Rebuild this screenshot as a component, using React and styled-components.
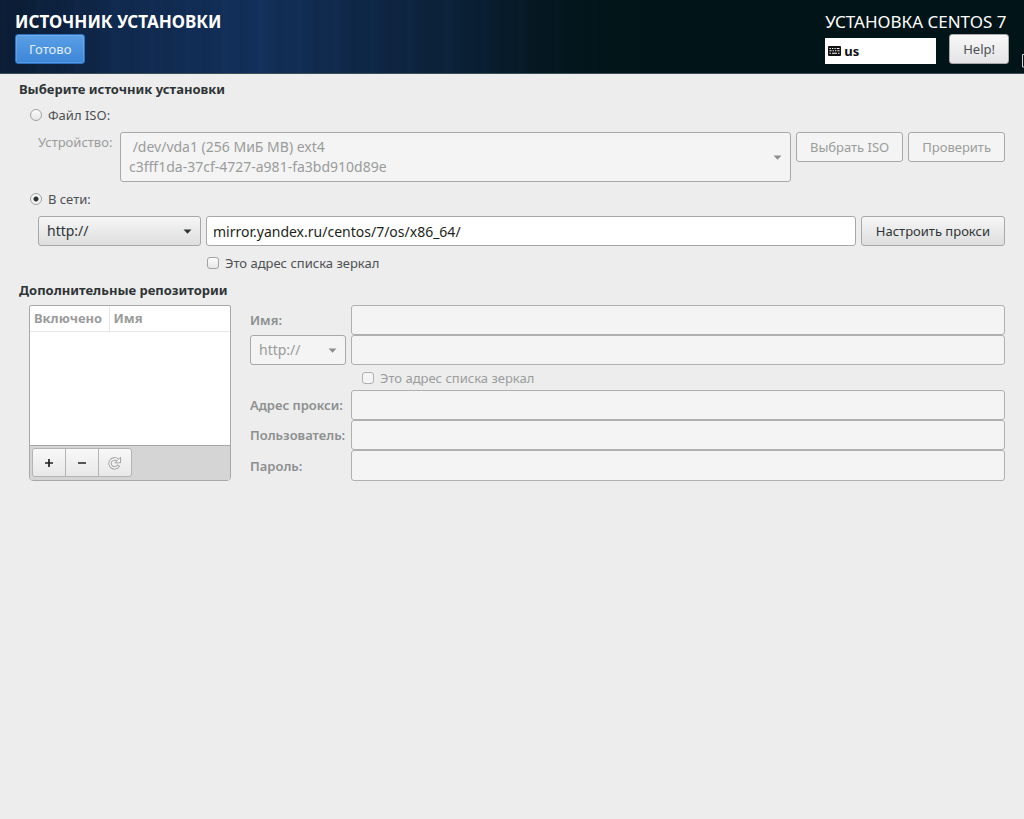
import React, { useState } from "react";
import styled, { createGlobalStyle, css } from "styled-components";

const colors = {
  page: "#ededed",
  text: "#2e3436",
  soft: "#4c5052",
  muted: "#9a9c9b",
  mutedBold: "#8c8f8f",
  border: "#a8a8a8",
  insensitive: "#f4f4f4",
};

const GlobalStyle = createGlobalStyle`
  * { box-sizing: border-box; }
  body { margin: 0; background: ${colors.page}; }
  body, button, input, select {
    font-family: "Noto Sans", "Open Sans", sans-serif;
    font-size: 13px;
    line-height: 20px;
    color: ${colors.text};
  }
`;

const Header = styled.header`
  position: relative;
  display: flex;
  justify-content: space-between;
  height: 74px;
  padding: 10px 15px 0;
  color: #fff;
  border-bottom: 1px solid #3a4f55;
  background:
    linear-gradient(90deg, transparent 45%, #011417 66%),
    repeating-linear-gradient(90deg, rgba(40,90,150,0.04) 0 4px, transparent 9px 15px, rgba(0,10,30,0.05) 19px 21px, transparent 27px 37px),
    linear-gradient(90deg, #0b1c33 0, #10294e 120px, #12305a 260px, #10294a 340px, #0b2138 450px, #061a26 560px, #011417 660px, #011417 100%);
`;

const Side = styled.div`
  display: flex;
  flex-direction: column;
  align-items: flex-start;
`;

const Title = styled.h1`
  margin: 0;
  font-size: 17px;
  line-height: 24px;
  font-weight: ${(p) => (p.$light ? 400 : 700)};
  text-transform: uppercase;
`;

const Controls = styled.div`
  display: flex;
  align-items: flex-end;
  align-self: stretch;
  justify-content: space-between;
  gap: 13px;
`;

const Button = styled.button`
  height: 30px;
  padding: 0 ${(p) => (p.$wide ? 14 : 13)}px;
  white-space: nowrap;
  border: 1px solid ${colors.border};
  border-radius: 3px;
  background: linear-gradient(#f6f6f6, #dedede);
  ${(p) => p.$primary && css`
    color: #e4effb;
    border-color: #2a72c4;
    background: linear-gradient(#5a9fe6, #3d86d8);
    box-shadow: inset 0 0 0 1px rgba(255,255,255,0.15);
  `}
  ${(p) => p.$soft && css`
    color: ${colors.soft};
    background: linear-gradient(#f8f8f8, #e4e4e6);
  `}
  &:disabled { color: ${colors.muted}; background: ${colors.insensitive}; }
`;

const Layout = styled.div`
  display: flex;
  align-items: center;
  gap: 3px;
  width: 111px;
  height: 26px;
  padding: 0 3px;
  background: #fff;
  color: #111;
  font-weight: 700;
`;

const Pointer = styled.svg`
  position: absolute;
  right: 0;
  top: 54px;
`;

const Main = styled.main`
  padding: 5px 19px 20px;
`;

const Heading = styled.h2`
  margin: 0;
  font-size: 13px;
  line-height: 20px;
  font-weight: 700;
`;

const Group = styled.section`
  display: flex;
  flex-direction: column;
  gap: 7px;
  padding: 6px 0 7px 19px;
`;

const Check = styled.label`
  display: flex;
  align-items: center;
  gap: 6px;
  height: 20px;
  color: ${(p) => (p.$disabled ? colors.muted : colors.soft)};
  margin-left: ${(p) => p.$indent || 0}px;
  input {
    appearance: none;
    flex: none;
    width: 12px;
    height: 12px;
    margin: 0;
    border: 1px solid #a2a2a2;
    border-radius: 3px;
    background: linear-gradient(#fcfcfc, #e6e6e6);
  }
  input[type="radio"] { border-radius: 50%; }
  input[type="radio"]:checked {
    background: radial-gradient(circle, #2e3436 0 2px, #f4f4f4 3px);
  }
  input[type="checkbox"]:checked {
    background: radial-gradient(circle, #2e3436 0 3px, #f4f4f4 4px);
  }
  input:disabled { background: ${colors.insensitive}; border-color: #b0b0b0; }
`;

const Radios = styled(Check)`
  margin-left: -8px;
`;

const Row = styled.div`
  display: flex;
  align-items: flex-start;
  gap: 5px;
`;

const FieldLabel = styled.label`
  width: 77px;
  white-space: nowrap;
  color: ${colors.muted};
`;

const SelectBox = styled.div`
  display: grid;
  align-items: center;
  width: ${(p) => p.$width || "auto"};
  flex: ${(p) => (p.$grow ? "1" : "none")};
  min-width: 0;
  > * { grid-area: 1 / 1; }
  > svg {
    justify-self: end;
    margin-right: 9px;
    pointer-events: none;
    fill: ${(p) => (p.$disabled ? "#8c8f8f" : "#2e3436")};
  }
`;

const Select = styled.select`
  appearance: none;
  width: 100%;
  height: ${(p) => (p.$tall ? 50 : 30)}px;
  padding: 0 24px 0 8px;
  font-size: 14px;
  border: 1px solid ${colors.border};
  border-radius: 3px;
  background: linear-gradient(#f6f6f6, #dedede);
  opacity: 1;
  &:disabled { color: ${colors.muted}; background: ${colors.insensitive}; }
  &&:disabled { ${(p) => p.$tall && "color: transparent;"} }
`;

const Device = styled.span`
  padding: 0 24px 0 9px;
  font-size: 14px;
  white-space: pre;
  color: ${colors.muted};
  pointer-events: none;
`;

const Input = styled.input`
  flex: 1;
  min-width: 0;
  width: 100%;
  height: 30px;
  padding: 0 6px;
  font-size: 14px;
  color: #1c1f20;
  border: 1px solid ${colors.border};
  border-radius: 3px;
  background: #fff;
  &:disabled { background: ${colors.insensitive}; border-color: #b0b0b0; }
`;

const Repos = styled.section`
  display: flex;
  align-items: flex-start;
  gap: 19px;
  padding: 5px 0 0 10px;
`;

const RepoPanel = styled.div`
  display: flex;
  flex-direction: column;
  flex: none;
  width: 202px;
  align-self: stretch;
  border: 1px solid ${colors.border};
  border-radius: 2px 2px 4px 4px;
  background: #fff;
  overflow: hidden;
`;

const RepoTable = styled.table`
  width: 100%;
  border-collapse: collapse;
  th {
    height: 25px;
    padding: 0 4px;
    text-align: left;
    line-height: 20px;
    color: ${colors.muted};
    border-bottom: 1px solid #e6e6e6;
  }
  th:first-child { width: 79px; border-right: 1px solid #e6e6e6; }
`;

const Toolbar = styled.div`
  display: flex;
  margin-top: auto;
  padding: 2px 2px 3px;
  border-top: 1px solid ${colors.border};
  background: #d5d5d5;
`;

const ToolButton = styled.button`
  display: flex;
  align-items: center;
  justify-content: center;
  width: 34px;
  height: 29px;
  padding: 0;
  border: 1px solid #b4b4b4;
  background: linear-gradient(#f8f8f8, #e8e8e8);
  & + & { margin-left: -1px; }
  &:first-child { border-radius: 3px 0 0 3px; }
  &:last-child { border-radius: 0 3px 3px 0; }
`;

const Form = styled.form`
  display: grid;
  flex: 1;
  grid-template-columns: 96px 1fr;
  column-gap: 5px;
  align-items: center;
  grid-template-rows: 30px 30px 25px 30px 30px 31px;
  input:not([type="checkbox"]) { height: 100%; }
`;

const FormLabel = styled.label`
  white-space: nowrap;
  font-weight: 600;
  color: ${colors.mutedBold};
`;

const Mirror = styled(Check)`
  grid-column: 2;
`;

const Arrow = () => (
  <svg width="9" height="5" viewBox="0 0 9 5" aria-hidden="true">
    <path d="M0.5 0.5h8L4.5 4.8z" />
  </svg>
);

const Keyboard = () => (
  <svg width="13" height="10" viewBox="0 0 13 10" aria-hidden="true">
    <rect width="13" height="10" rx="1" fill="#111" />
    <path
      d="M1.5 2.5h1.4M4 2.5h1.3M6.4 2.5h1.3M8.8 2.5h2.7M1.5 4.7h2M4.6 4.7h1.3M7 4.7h1.3M9.4 4.7h2.1M1.5 7.2h1.4M4 7.2h5M10.1 7.2h1.4"
      stroke="#fff"
      strokeWidth="1.1"
    />
  </svg>
);

const Refresh = () => (
  <svg width="14" height="14" viewBox="0 0 14 14" fill="none" aria-hidden="true">
    <path d="M10.6 9.3A4.5 4.5 0 1 1 9.4 3.9" stroke="#999" strokeWidth="3.2" />
    <path d="M12.6 1.2v5.6H7z" fill="#f8f8f8" stroke="#999" strokeWidth="0.9" strokeLinejoin="round" />
    <path d="M10.3 9.8A4.5 4.5 0 1 1 9.6 4.1" stroke="#f8f8f8" strokeWidth="1.5" />
  </svg>
);

export default function App() {
  const [source, setSource] = useState("net");
  const [mirror, setMirror] = useState(false);
  const [url, setUrl] = useState("mirror.yandex.ru/centos/7/os/x86_64/");

  return (
    <>
      <GlobalStyle />
      <Header>
        <Side>
          <Title>Источник установки</Title>
          <Button type="button" $primary>Готово</Button>
        </Side>
        <Side>
          <Title as="div" $light>Установка CentOS 7</Title>
          <Controls>
            <Layout><Keyboard />us</Layout>
            <Button type="button" $soft>Help!</Button>
          </Controls>
        </Side>
        <Pointer width="2" height="14" viewBox="0 0 2 14" aria-hidden="true">
          <path d="M2 0.5H0.5v12.5H2" fill="#111" stroke="#cfd6d8" />
        </Pointer>
      </Header>

      <Main>
        <Heading>Выберите источник установки</Heading>
        <Group>
          <Radios>
            <input type="radio" name="source" checked={source === "iso"} onChange={() => setSource("iso")} />
            Файл ISO:
          </Radios>
          <Row>
            <FieldLabel htmlFor="device">Устройство:</FieldLabel>
            <SelectBox $grow $disabled>
              <Select id="device" $tall disabled>
                <option>/dev/vda1 (256 МиБ MB) ext4 c3fff1da-37cf-4727-a981-fa3bd910d89e</option>
              </Select>
              <Device aria-hidden="true">{" /dev/vda1 (256 МиБ MB) ext4\nc3fff1da-37cf-4727-a981-fa3bd910d89e"}</Device>
              <Arrow />
            </SelectBox>
            <Button type="button" disabled>Выбрать ISO</Button>
            <Button type="button" disabled>Проверить</Button>
          </Row>
          <Radios>
            <input type="radio" name="source" checked={source === "net"} onChange={() => setSource("net")} />
            В сети:
          </Radios>
          <Row>
            <SelectBox $width="163px">
              <Select aria-label="Протокол">
                <option>http://</option>
                <option>https://</option>
                <option>ftp://</option>
                <option>nfs</option>
              </Select>
              <Arrow />
            </SelectBox>
            <Input aria-label="Адрес" value={url} onChange={(e) => setUrl(e.target.value)} />
            <Button type="button" $wide>Настроить прокси</Button>
          </Row>
          <Check $indent={169}>
            <input type="checkbox" checked={mirror} onChange={(e) => setMirror(e.target.checked)} />
            Это адрес списка зеркал
          </Check>
        </Group>

        <Heading>Дополнительные репозитории</Heading>
        <Repos>
          <RepoPanel>
            <RepoTable>
              <thead>
                <tr>
                  <th scope="col">Включено</th>
                  <th scope="col">Имя</th>
                </tr>
              </thead>
              <tbody />
            </RepoTable>
            <Toolbar>
              <ToolButton type="button" aria-label="Добавить">
                <svg width="10" height="10" viewBox="0 0 10 10"><path d="M1 5h8M5 1v8" stroke="#222" strokeWidth="1.7" /></svg>
              </ToolButton>
              <ToolButton type="button" aria-label="Удалить">
                <svg width="10" height="10" viewBox="0 0 10 10"><path d="M1 5h8" stroke="#222" strokeWidth="1.7" /></svg>
              </ToolButton>
              <ToolButton type="button" aria-label="Обновить" disabled>
                <Refresh />
              </ToolButton>
            </Toolbar>
          </RepoPanel>
          <Form>
            <FormLabel htmlFor="repo-name">Имя:</FormLabel>
            <Input id="repo-name" disabled />
            <SelectBox $disabled $width="96px">
              <Select aria-label="Протокол репозитория" disabled>
                <option>http://</option>
              </Select>
              <Arrow />
            </SelectBox>
            <Input aria-label="Адрес репозитория" disabled />
            <Mirror $disabled $indent={11}>
              <input type="checkbox" disabled />
              Это адрес списка зеркал
            </Mirror>
            <FormLabel htmlFor="proxy">Адрес прокси:</FormLabel>
            <Input id="proxy" disabled />
            <FormLabel htmlFor="user">Пользователь:</FormLabel>
            <Input id="user" disabled />
            <FormLabel htmlFor="password">Пароль:</FormLabel>
            <Input id="password" type="password" autoComplete="off" disabled />
          </Form>
        </Repos>
      </Main>
    </>
  );
}
